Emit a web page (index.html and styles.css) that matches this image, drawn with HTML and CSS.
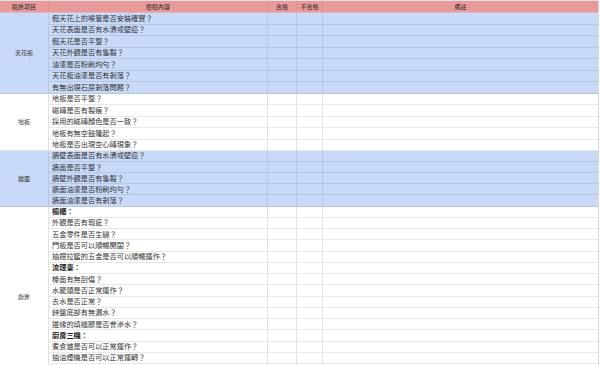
FILE: index.html
```html
<!DOCTYPE html>
<html lang="zh-Hant">
<head>
<meta charset="utf-8">
<title>驗房清單</title>
<link rel="stylesheet" href="styles.css">
</head>
<body>
<div class="sheet">
  <div class="head">
    <div class="hc c1">驗房項目</div>
    <div class="hc c2">檢驗內容</div>
    <div class="hc c3">合格</div>
    <div class="hc c4">不合格</div>
    <div class="hc c5">備註</div>
  </div>

  <section class="sec blue s-ceil">
    <div class="cat">天花板</div>
    <div class="rows">
      <div class="row"><div class="txt">假天花上的喉管是否安裝確實？</div><div class="c c3"></div><div class="c c4"></div><div class="c c5"></div></div>
      <div class="row"><div class="txt">天花表面是否有水漬或壁癌？</div><div class="c c3"></div><div class="c c4"></div><div class="c c5"></div></div>
      <div class="row"><div class="txt">假天花是否平整？</div><div class="c c3"></div><div class="c c4"></div><div class="c c5"></div></div>
      <div class="row"><div class="txt">天花外觀是否有龜裂？</div><div class="c c3"></div><div class="c c4"></div><div class="c c5"></div></div>
      <div class="row"><div class="txt">油漆是否粉刷均勻？</div><div class="c c3"></div><div class="c c4"></div><div class="c c5"></div></div>
      <div class="row"><div class="txt">天花板油漆是否有剝落？</div><div class="c c3"></div><div class="c c4"></div><div class="c c5"></div></div>
      <div class="row"><div class="txt">有無出現石屎剝落問題？</div><div class="c c3"></div><div class="c c4"></div><div class="c c5"></div></div>
    </div>
  </section>

  <section class="sec white s-floor">
    <div class="cat">地板</div>
    <div class="rows">
      <div class="row"><div class="txt">地板是否平整？</div><div class="c c3"></div><div class="c c4"></div><div class="c c5"></div></div>
      <div class="row"><div class="txt">磁磚是否有裂痕？</div><div class="c c3"></div><div class="c c4"></div><div class="c c5"></div></div>
      <div class="row"><div class="txt">採用的磁磚顏色是否一致？</div><div class="c c3"></div><div class="c c4"></div><div class="c c5"></div></div>
      <div class="row"><div class="txt">地板有無空鼓隆起？</div><div class="c c3"></div><div class="c c4"></div><div class="c c5"></div></div>
      <div class="row"><div class="txt">地板是否出現空心磚現象？</div><div class="c c3"></div><div class="c c4"></div><div class="c c5"></div></div>
    </div>
  </section>

  <section class="sec blue s-wall">
    <div class="cat">牆面</div>
    <div class="rows">
      <div class="row"><div class="txt">牆壁表面是否有水漬或壁癌？</div><div class="c c3"></div><div class="c c4"></div><div class="c c5"></div></div>
      <div class="row"><div class="txt">牆面是否平整？</div><div class="c c3"></div><div class="c c4"></div><div class="c c5"></div></div>
      <div class="row"><div class="txt">牆壁外觀是否有龜裂？</div><div class="c c3"></div><div class="c c4"></div><div class="c c5"></div></div>
      <div class="row"><div class="txt">牆面油漆是否粉刷均勻？</div><div class="c c3"></div><div class="c c4"></div><div class="c c5"></div></div>
      <div class="row"><div class="txt">牆面油漆是否有剝落？</div><div class="c c3"></div><div class="c c4"></div><div class="c c5"></div></div>
    </div>
  </section>

  <section class="sec white s-kitchen">
    <div class="cat">廚房</div>
    <div class="rows">
      <div class="row"><div class="txt bold">櫥櫃：</div><div class="c c3"></div><div class="c c4"></div><div class="c c5"></div></div>
      <div class="row"><div class="txt">外觀是否有瑕疵？</div><div class="c c3"></div><div class="c c4"></div><div class="c c5"></div></div>
      <div class="row"><div class="txt">五金零件是否生鏽？</div><div class="c c3"></div><div class="c c4"></div><div class="c c5"></div></div>
      <div class="row"><div class="txt">門板是否可以順暢開闔？</div><div class="c c3"></div><div class="c c4"></div><div class="c c5"></div></div>
      <div class="row"><div class="txt">抽屜拉籃的五金是否可以順暢運作？</div><div class="c c3"></div><div class="c c4"></div><div class="c c5"></div></div>
      <div class="row"><div class="txt bold">流理臺：</div><div class="c c3"></div><div class="c c4"></div><div class="c c5"></div></div>
      <div class="row"><div class="txt">檯面有無刮傷？</div><div class="c c3"></div><div class="c c4"></div><div class="c c5"></div></div>
      <div class="row"><div class="txt">水龍頭是否正常運作？</div><div class="c c3"></div><div class="c c4"></div><div class="c c5"></div></div>
      <div class="row"><div class="txt">去水是否正常？</div><div class="c c3"></div><div class="c c4"></div><div class="c c5"></div></div>
      <div class="row"><div class="txt">鋅盤底部有無漏水？</div><div class="c c3"></div><div class="c c4"></div><div class="c c5"></div></div>
      <div class="row"><div class="txt">邊緣的填縫膠是否會滲水？</div><div class="c c3"></div><div class="c c4"></div><div class="c c5"></div></div>
      <div class="row"><div class="txt bold">廚房三機：</div><div class="c c3"></div><div class="c c4"></div><div class="c c5"></div></div>
      <div class="row"><div class="txt">煮食爐是否可以正常運作？</div><div class="c c3"></div><div class="c c4"></div><div class="c c5"></div></div>
      <div class="row"><div class="txt">抽油煙機是否可以正常運轉？</div><div class="c c3"></div><div class="c c4"></div><div class="c c5"></div></div>
      <div class="row"><div class="txt"></div><div class="c c3"></div><div class="c c4"></div><div class="c c5"></div></div>
      <div class="row"><div class="txt"></div><div class="c c3"></div><div class="c c4"></div><div class="c c5"></div></div>
    </div>
  </section>
</div>
</body>
</html>
```

FILE: styles.css
```css
html, body {
  margin: 0;
  padding: 0;
  overflow: hidden;
  background: #ffffff;
}
body {
  width: 600px;
  height: 365px;
  font-family: "Noto Sans CJK TC", "Noto Sans CJK SC", "Noto Sans", sans-serif;
  color: #333333;
}
.sheet {
  width: 598px;
  border-right: 1px solid #d6d6d6;
  border-top: 1px solid #dde3ee;
}
.head {
  display: flex;
  height: 11.3px;
  background: #ea9999;
  border-bottom: 1px solid #d7b9c4;
}
.hc {
  box-sizing: border-box;
  display: flex;
  align-items: center;
  justify-content: center;
  font-size: 6px;
  line-height: 1;
  color: #2a2a2a;
  border-right: 1px solid #e28f8f;
}
.c1 { width: 49px; flex: none; }
.c2 { width: 219px; flex: none; }
.c3 { width: 29px; flex: none; }
.c4 { width: 26px; flex: none; }
.c5 { flex: 1; border-right: none; }

.sec {
  display: flex;
}
.sec.blue { background: #c9daf8; }
.sec.white { background: #ffffff; }

.cat {
  box-sizing: border-box;
  width: 49px;
  flex: none;
  display: flex;
  align-items: center;
  justify-content: center;
  font-size: 6px;
  color: #333333;
  border-right: 1px solid #e2e2e2;
  border-bottom: 1px solid #e2e2e2;
}
.blue .cat { border-right-color: #b7c6e3; border-bottom-color: #b7c6e3; }

.rows {
  flex: 1;
  display: flex;
  flex-direction: column;
}
.row {
  box-sizing: border-box;
  display: flex;
  border-bottom: 1px solid #e8e8e8;
}
.blue .row { border-bottom-color: #b7c6e3; }

.s-ceil .row { height: 11.49px; }
.s-floor .row { height: 11.46px; }
.s-wall .row { height: 11.14px; }
.s-kitchen .row { height: 11.26px; }

.txt {
  box-sizing: border-box;
  width: 219px;
  flex: none;
  display: flex;
  align-items: center;
  padding-left: 3px;
  font-size: 7.2px;
  line-height: 1;
  color: #333333;
  white-space: nowrap;
  border-right: 1px solid #e2e2e2;
}
.txt.bold { font-weight: 700; color: #1e1e1e; }
.c {
  box-sizing: border-box;
  border-right: 1px solid #e2e2e2;
}
.blue .txt, .blue .c { border-right-color: #b7c6e3; }
.c.c5 { border-right: none; }
```
